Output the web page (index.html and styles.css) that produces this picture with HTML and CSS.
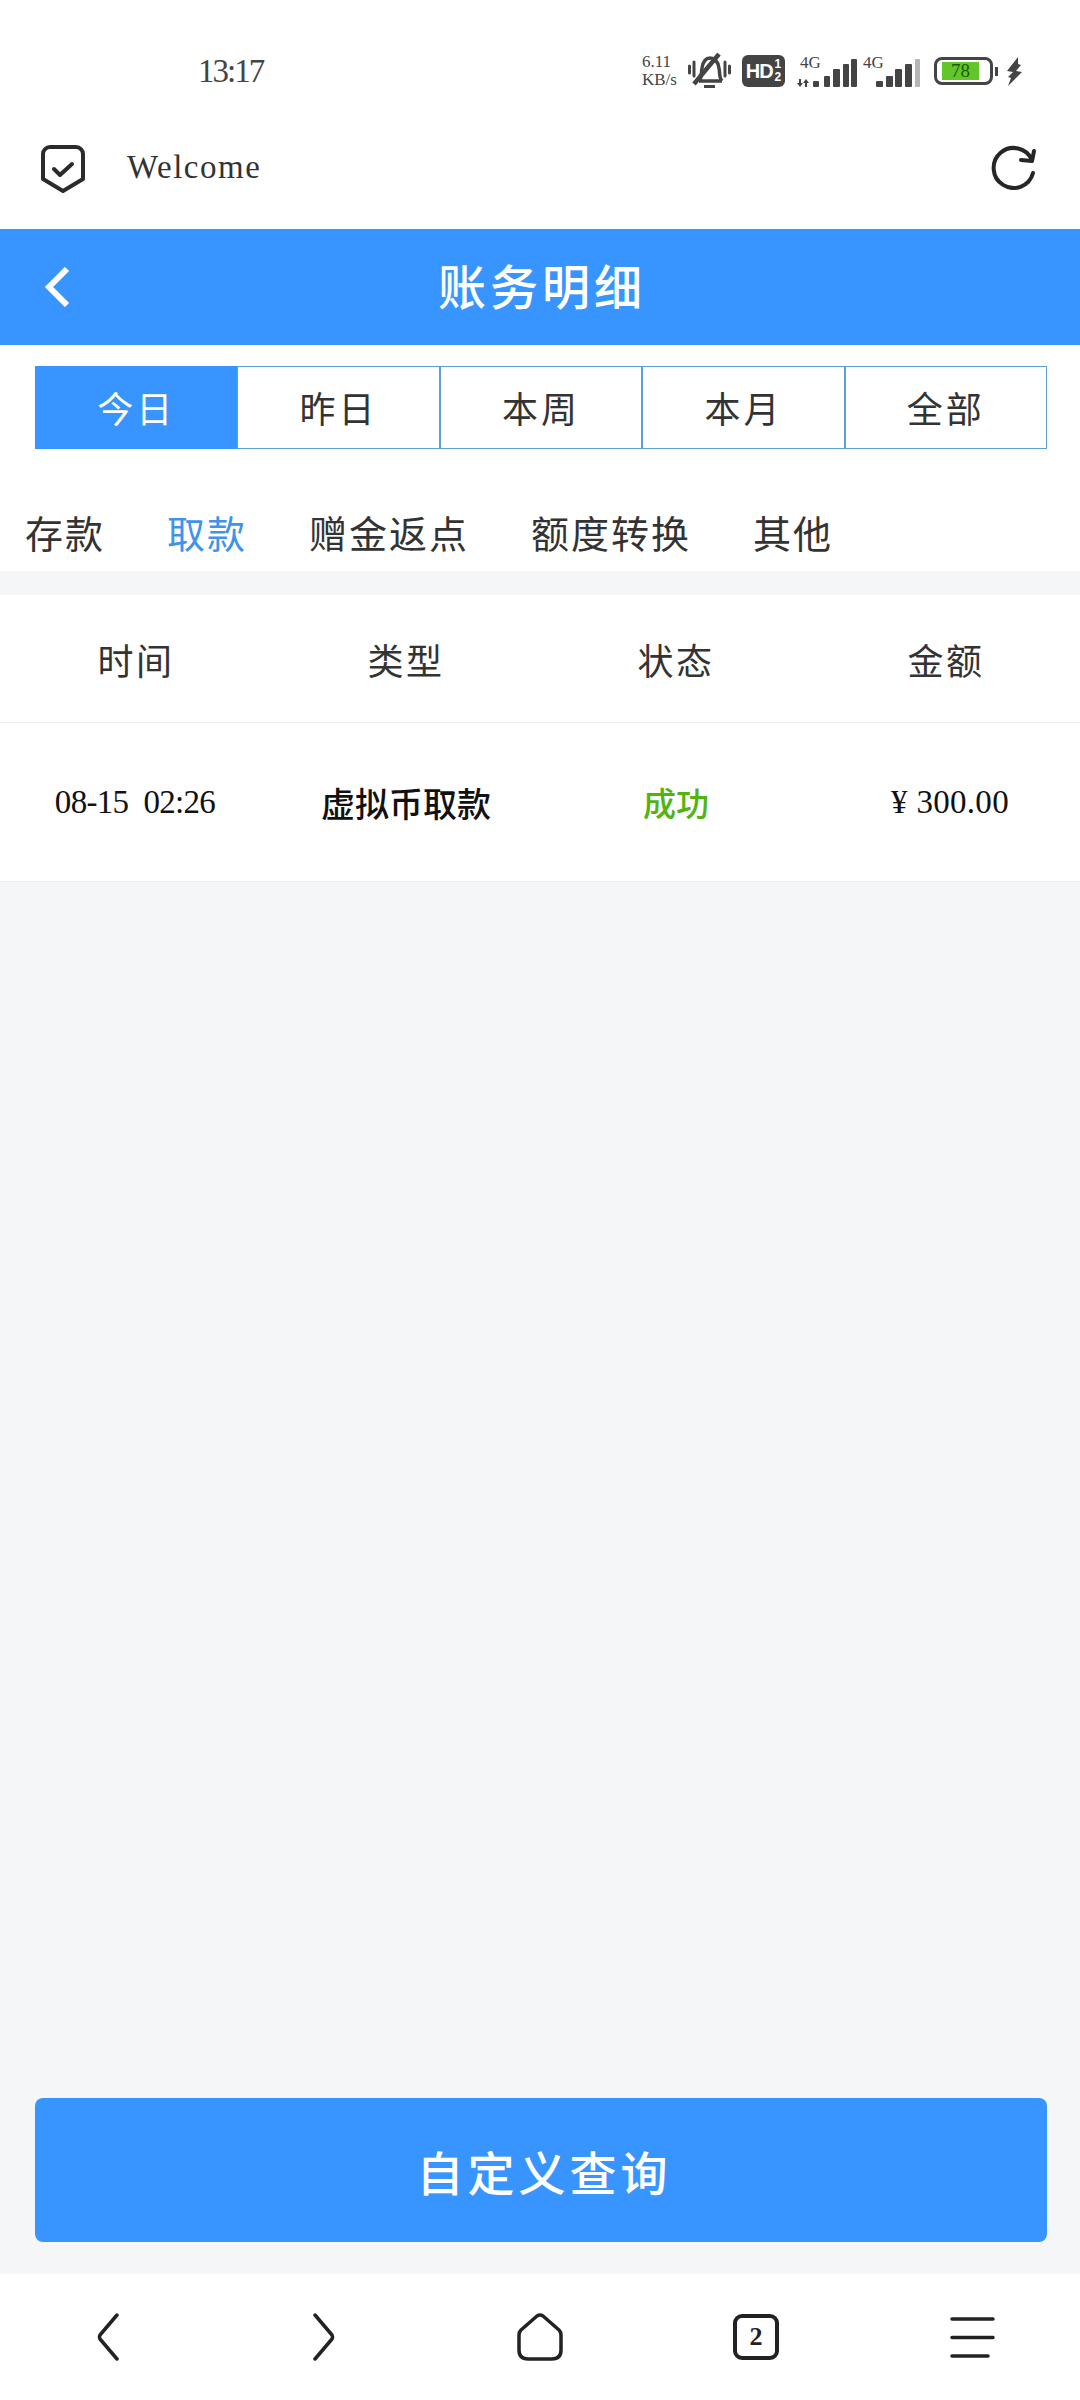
FILE: index.html
```html
<!DOCTYPE html>
<html lang="zh-CN">

<head>
    <meta charset="UTF-8">
    <meta name="viewport" content="width=device-width, initial-scale=1.0">
    <title>账务明细</title>
    <link rel="stylesheet" href="styles.css">
</head>

<body>
    <div class="page">
        <!-- phone status bar -->
        <div class="status-bar">
            <div class="clock">13:17</div>
            <div class="status-icons">
                <div class="speed">6.11<br>KB/s</div>
                <svg class="icon-bell" width="43" height="36" viewBox="0 0 43 36" fill="none" stroke="#444">
                    <path d="M11 28c3-3 2-8 3-13 1-6 4-10 8-10 5 0 8 4 9 10 1 5 0 10 3 13" stroke-width="3.5"/>
                    <path d="M11 28h23" stroke-width="3.5"/>
                    <path d="M31 1 6 31" stroke-width="4.5"/>
                    <path d="M16 33.5h11" stroke-width="3"/>
                    <path d="M1.5 13v7M6 9v14M37 9v14M41.5 13v7" stroke-width="3" stroke-linecap="round"/>
                </svg>
                <div class="hd-badge">
                    <span class="hd-text">HD</span>
                    <span class="hd-frac">1<br>2</span>
                </div>
                <svg class="icon-sim1" width="61" height="40" viewBox="0 -4 61 40" fill="#444">
                    <text x="3" y="13" class="net-label">4G</text>
                    <path d="M2 24h2v4h2l-3 4-3-4h2zM8 32h2v-4h2l-3-4-3 4h2z"/>
                    <rect x="16" y="26" width="6" height="6" rx="1"/>
                    <rect x="27" y="21" width="6" height="11" rx="1"/>
                    <rect x="36" y="14" width="7" height="18" rx="1"/>
                    <rect x="46" y="9" width="6" height="23" rx="1"/>
                    <rect x="54" y="4" width="6" height="28" rx="1"/>
                </svg>
                <svg class="icon-sim2" width="57" height="40" viewBox="0 -4 57 40" fill="#444">
                    <text x="0" y="13" class="net-label">4G</text>
                    <rect x="13" y="26" width="7" height="6" rx="1"/>
                    <rect x="23" y="21" width="7" height="11" rx="1"/>
                    <rect x="32" y="14" width="7" height="18" rx="1"/>
                    <rect x="42" y="9" width="7" height="23" rx="1"/>
                    <rect x="52" y="4" width="5" height="28" rx="1" fill="#b5b5b5"/>
                </svg>
                <div class="battery">
                    <div class="battery-level">78</div>
                </div>
                <div class="battery-nub"></div>
                <svg class="icon-bolt" width="17" height="29" viewBox="0 0 17 29" fill="#444">
                    <path d="M12 0 1 14l6 1-5 5 3 1-3 8 14-14-6-1 5-6-3-1z"/>
                </svg>
            </div>
        </div>

        <!-- browser toolbar -->
        <div class="toolbar">
            <svg class="shield" width="44" height="48" viewBox="0 0 44 48" fill="none" stroke="#2b2b2b" stroke-width="4" stroke-linejoin="round" stroke-linecap="round">
                <path d="M9 2h26a7 7 0 0 1 7 7v25l-20 12L2 34V9a7 7 0 0 1 7-7z"/>
                <path d="M13 24l6 6 12-11"/>
            </svg>
            <div class="welcome">Welcome</div>
            <svg class="reload" width="46" height="46" viewBox="0 0 46 46" fill="none" stroke="#262626" stroke-width="4" stroke-linecap="round" stroke-linejoin="round">
                <path d="M42 29a20 20 0 1 1-1-13"/>
                <path d="M43 7l-2 10-11-1"/>
            </svg>
        </div>

        <div class="header">
            <svg class="back" width="26" height="40" viewBox="0 0 26 40" fill="none" stroke="#fff" stroke-width="6">
                <path d="M23 2 5 20l18 18"/>
            </svg>
            <h2>账务明细</h2>
        </div>

        <div class="date-tabs">
            <div class="date-tab active">今日</div>
            <div class="date-tab">昨日</div>
            <div class="date-tab">本周</div>
            <div class="date-tab">本月</div>
            <div class="date-tab">全部</div>
        </div>

        <div class="type-tabs">
            <div class="type-tab">存款</div>
            <div class="type-tab active">取款</div>
            <div class="type-tab">赠金返点</div>
            <div class="type-tab">额度转换</div>
            <div class="type-tab">其他</div>
        </div>

        <div class="content">
            <div class="table">
                <div class="table-row table-head">
                    <div>时间</div>
                    <div>类型</div>
                    <div>状态</div>
                    <div>金额</div>
                </div>
                <div class="table-row table-item">
                    <div class="cell-time">08-15&nbsp; 02:26</div>
                    <div class="cell-type">虚拟币取款</div>
                    <div class="cell-status">成功</div>
                    <div class="cell-money">¥ 300.00</div>
                </div>
            </div>
            <button type="button" class="query-btn">自定义查询</button>
        </div>

        <!-- browser bottom bar -->
        <div class="bottom-nav">
            <div class="nav-item">
                <svg width="24" height="48" viewBox="0 0 24 48" fill="none" stroke="#222" stroke-width="3.5" stroke-linecap="round" stroke-linejoin="round">
                    <path d="M21 2 4 22q-1 2 0 4l17 20"/>
                </svg>
            </div>
            <div class="nav-item">
                <svg width="24" height="48" viewBox="0 0 24 48" fill="none" stroke="#222" stroke-width="3.5" stroke-linecap="round" stroke-linejoin="round">
                    <path d="M3 2l17 20q1 2 0 4L3 46"/>
                </svg>
            </div>
            <div class="nav-item">
                <svg width="46" height="48" viewBox="0 0 46 48" fill="none" stroke="#222" stroke-width="3.5" stroke-linejoin="round">
                    <path d="M20 3q3-2 6 0l16 14q2 2 2 5v15q0 9-9 9H11q-9 0-9-9V22q0-3 2-5z"/>
                </svg>
            </div>
            <div class="nav-item">
                <div class="tab-count">2</div>
            </div>
            <div class="nav-item">
                <svg width="46" height="46" viewBox="0 0 46 46" fill="none" stroke="#222" stroke-width="3.5" stroke-linecap="round">
                    <path d="M3 5h41M3 23.5h41M3 42h36"/>
                </svg>
            </div>
        </div>
    </div>
</body>

</html>
```

FILE: styles.css
```css
* {
    box-sizing: border-box;
}

body {
    margin: 0;
    padding: 0;
    font-family: "Liberation Serif", "Noto Sans CJK SC", serif;
    color: #333;
    background-color: #fff;
}

.page {
    width: 1080px;
    height: 2400px;
    display: flex;
    flex-direction: column;
}

.status-bar {
    height: 90px;
    flex: none;
    padding: 52px 57px 0 198px;
    display: flex;
    justify-content: space-between;
    align-items: center;
}

.clock {
    font-size: 33px;
    letter-spacing: -2px;
    color: #444;
}

.status-icons {
    display: flex;
    align-items: center;
    color: #444;
}

.speed {
    font-size: 17px;
    line-height: 18px;
    width: 38px;
}

.icon-bell {
    margin-left: 8px;
}

.hd-badge {
    width: 43px;
    height: 32px;
    margin-left: 11px;
    background-color: #444;
    border-radius: 6px;
    color: #fff;
    font-family: "Liberation Sans", sans-serif;
    font-weight: bold;
    display: flex;
    align-items: center;
    justify-content: center;
}

.hd-text {
    font-size: 20px;
    letter-spacing: -1px;
}

.hd-frac {
    font-size: 12px;
    line-height: 13px;
    margin-left: 2px;
}

.icon-sim1 {
    margin-left: 12px;
}

.icon-sim2 {
    margin-left: 5px;
}

.net-label {
    font-family: "Liberation Serif", serif;
    font-size: 17px;
}

.battery {
    width: 59px;
    height: 28px;
    margin-left: 14px;
    border: 3px solid #444;
    border-radius: 8px;
    padding: 2px 5px;
}

.battery-level {
    width: 37px;
    height: 18px;
    background-color: #62c62a;
    color: #1c5a10;
    font-size: 19px;
    line-height: 18px;
    text-align: center;
}

.battery-nub {
    width: 3px;
    height: 9px;
    margin-left: 2px;
    background-color: #444;
}

.icon-bolt {
    margin-left: 8px;
}

.toolbar {
    height: 139px;
    flex: none;
    padding: 15px 43px 0 41px;
    display: flex;
    align-items: center;
}

.shield {
    margin-top: 3px;
}

.welcome {
    flex: 1;
    margin-left: 42px;
    font-size: 33px;
    letter-spacing: 1.5px;
    color: #333;
}

.header {
    height: 116px;
    flex: none;
    background-color: #3894ff;
    color: #fff;
    display: flex;
    align-items: center;
    justify-content: center;
    position: relative;
}

.header h2 {
    margin: 0 0 6px;
    padding-left: 4px;
    font-size: 48px;
    font-weight: 500;
    letter-spacing: 4px;
}

.back {
    position: absolute;
    left: 44px;
    top: 38px;
}

.date-tabs {
    flex: none;
    margin: 21px 33px 0 35px;
    height: 83px;
    display: flex;
}

.date-tab {
    flex: 1;
    border: 1px solid #5f9fd6;
    display: flex;
    align-items: center;
    justify-content: center;
    font-size: 36px;
    letter-spacing: 3px;
    padding-bottom: 2px;
}

.date-tab.active {
    background-color: #3894ff;
    border-color: #3894ff;
    color: #fff;
}

.type-tabs {
    flex: none;
    height: 122px;
    padding: 42px 0 0 25px;
    display: flex;
    align-items: center;
    gap: 62px;
}

.type-tab {
    font-size: 38px;
    letter-spacing: 2px;
}

.type-tab.active {
    color: #4093ea;
}

.content {
    flex: 1;
    background-color: #f4f6f8;
    padding-top: 24px;
    display: flex;
    flex-direction: column;
}

.table {
    flex: 1;
}

.table-row {
    display: grid;
    grid-template-columns: repeat(4, 1fr);
    align-items: center;
    text-align: center;
    background-color: #fff;
}

.table-head {
    height: 128px;
    border-bottom: 1px solid #efefef;
    font-size: 36px;
    letter-spacing: 2.5px;
    text-indent: 2px;
}

.table-item {
    height: 159px;
    border-bottom: 1px solid #efefef;
    color: #111;
    font-size: 33px;
}

.cell-time {
    font-size: 33px;
    letter-spacing: -0.7px;
}

.cell-type {
    font-size: 34px;
    font-weight: 500;
    padding-left: 2px;
}

.cell-status {
    color: #52b312;
    font-weight: 500;
    padding-left: 2px;
}

.cell-money {
    font-size: 33px;
    letter-spacing: 0.3px;
    padding-left: 10px;
}

.query-btn {
    margin: 0 33px 32px 35px;
    height: 144px;
    flex: none;
    border: none;
    border-radius: 8px;
    padding: 0 0 0 6px;
    background-color: #3894ff;
    color: #fff;
    font-family: inherit;
    font-size: 47px;
    letter-spacing: 4px;
    font-weight: 500;
}

.bottom-nav {
    height: 126px;
    flex: none;
    display: grid;
    grid-template-columns: repeat(5, 1fr);
    align-items: center;
    background-color: #fff;
}

.nav-item {
    display: flex;
    justify-content: center;
    align-items: center;
}

.tab-count {
    width: 46px;
    height: 46px;
    border: 4px solid #222;
    border-radius: 9px;
    display: flex;
    align-items: center;
    justify-content: center;
    font-size: 26px;
    font-weight: bold;
    color: #222;
}
```
